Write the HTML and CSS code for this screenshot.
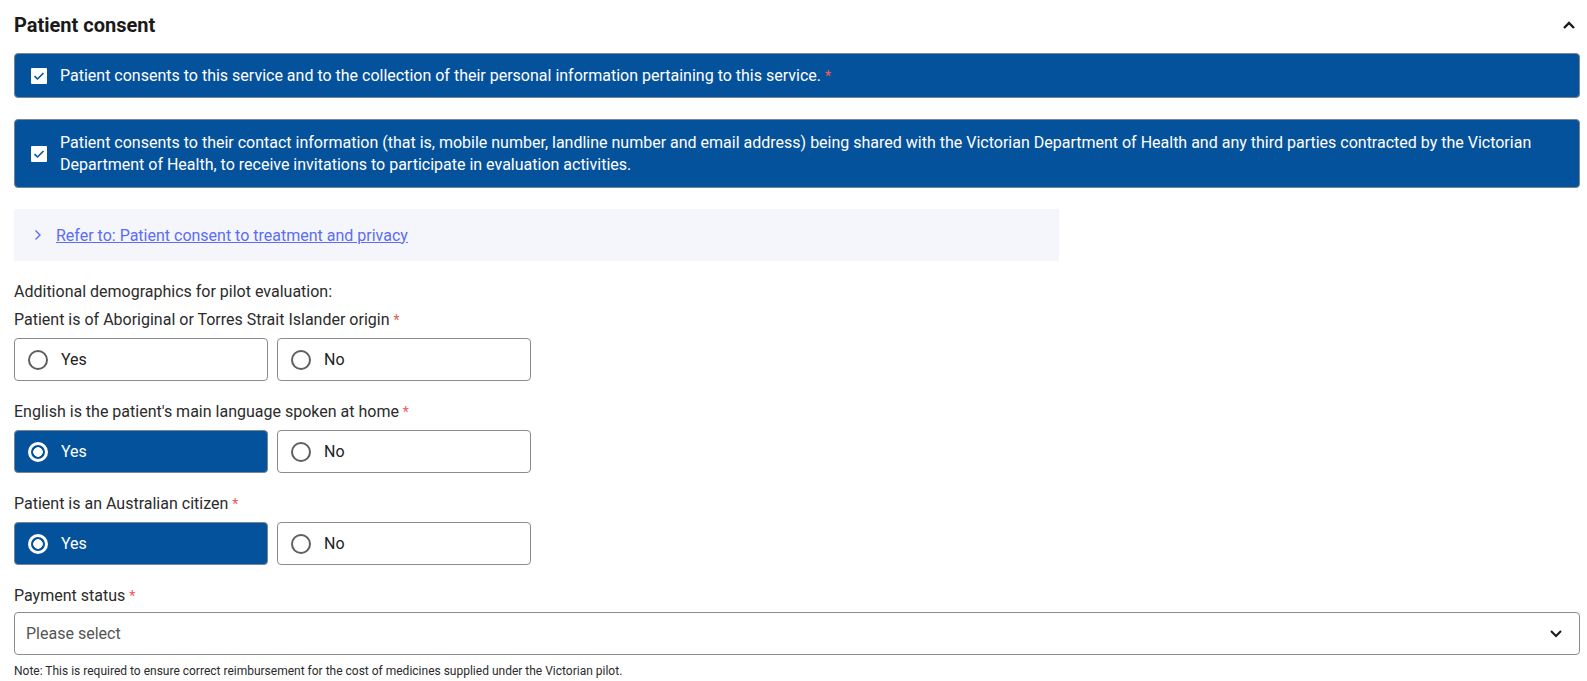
FILE: index.html
```html
<!DOCTYPE html>
<html lang="en">
<head>
    <meta charset="UTF-8">
    <meta name="viewport" content="width=device-width, initial-scale=1.0">
    <title>Patient consent</title>
    <link rel="stylesheet" href="styles.css">
</head>
<body>
    <div class="section">
        <div class="section-header">
            <h2>Patient consent</h2>
            <svg class="collapse-icon" width="14" height="10" viewBox="0 0 14 10">
                <path d="M2 8 L7 3 L12 8" fill="none" stroke="#1a1a1a" stroke-width="2.4"/>
            </svg>
        </div>

        <label class="consent-box">
            <span class="checkbox">
                <svg width="12" height="10" viewBox="0 0 12 10"><path d="M1.5 5.2 L4.5 8 L10.5 2" fill="none" stroke="#05529c" stroke-width="1.6"/></svg>
            </span>
            <span>Patient consents to this service and to the collection of their personal information pertaining to this service. <span class="req">*</span></span>
        </label>

        <label class="consent-box tall">
            <span class="checkbox">
                <svg width="12" height="10" viewBox="0 0 12 10"><path d="M1.5 5.2 L4.5 8 L10.5 2" fill="none" stroke="#05529c" stroke-width="1.6"/></svg>
            </span>
            <span>Patient consents to their contact information (that is, mobile number, landline number and email address) being shared with the Victorian Department of Health and any third parties contracted by the Victorian Department of Health, to receive invitations to participate in evaluation activities.</span>
        </label>

        <div class="refer-box">
            <svg width="8" height="12" viewBox="0 0 8 12"><path d="M1.5 1.5 L6 6 L1.5 10.5" fill="none" stroke="#5b6cf5" stroke-width="1.4"/></svg>
            <a href="#">Refer to: Patient consent to treatment and privacy</a>
        </div>

        <p class="intro">Additional demographics for pilot evaluation:</p>

        <div class="field first">
            <div class="field-label">Patient is of Aboriginal or Torres Strait Islander origin <span class="req">*</span></div>
            <div class="radio-row">
                <div class="radio"><span class="dot"></span>Yes</div>
                <div class="radio"><span class="dot"></span>No</div>
            </div>
        </div>

        <div class="field">
            <div class="field-label">English is the patient's main language spoken at home <span class="req">*</span></div>
            <div class="radio-row">
                <div class="radio selected"><span class="dot"></span>Yes</div>
                <div class="radio"><span class="dot"></span>No</div>
            </div>
        </div>

        <div class="field">
            <div class="field-label">Patient is an Australian citizen <span class="req">*</span></div>
            <div class="radio-row">
                <div class="radio selected"><span class="dot"></span>Yes</div>
                <div class="radio"><span class="dot"></span>No</div>
            </div>
        </div>

        <div class="field">
            <div class="field-label select-label">Payment status <span class="req">*</span></div>
            <div class="select">
                <span>Please select</span>
                <svg width="14" height="9" viewBox="0 0 14 9"><path d="M2 2 L7 7 L12 2" fill="none" stroke="#1a1a1a" stroke-width="2"/></svg>
            </div>
            <p class="note">Note: This is required to ensure correct reimbursement for the cost of medicines supplied under the Victorian pilot.</p>
        </div>
    </div>
</body>
</html>
```

FILE: styles.css
```css
body {
    margin: 0;
    padding: 0;
    background: #ffffff;
    color: #2b2b2b;
    font-family: Roboto, "Noto Sans", Arial, sans-serif;
}
.section {
    padding: 0 7px 0 14px;
}
.section-header {
    height: 46px;
    box-sizing: border-box;
    padding-top: 4px;
    display: flex;
    align-items: center;
    justify-content: space-between;
}
h2 {
    margin: 0;
    font-size: 20px;
    font-weight: 700;
    color: #1a1a1a;
}
.collapse-icon {
    margin-right: 4px;
}
.consent-box {
    margin-top: 7px;
    height: 45px;
    box-sizing: border-box;
    display: flex;
    align-items: center;
    gap: 13px;
    padding: 0 20px 0 16px;
    background-color: #05529c;
    border: 1px solid #7a8594;
    border-radius: 4px;
    color: #ffffff;
    font-size: 16px;
    line-height: 22px;
}
.consent-box.tall {
    margin-top: 21px;
    height: 69px;
}
.checkbox {
    flex: none;
    width: 16px;
    height: 16px;
    background: #ffffff;
    border-radius: 1px;
    display: flex;
    align-items: center;
    justify-content: center;
}
.req {
    color: #ea5a55;
    font-size: 14px;
}
.consent-box .req {
    color: #ff5a5a;
}
.refer-box {
    margin-top: 21px;
    width: 1045px;
    height: 52px;
    box-sizing: border-box;
    display: flex;
    align-items: center;
    gap: 14px;
    padding-left: 20px;
    background-color: #f5f6fb;
    font-size: 16px;
}
.refer-box a {
    color: #5b6cf5;
    text-decoration: underline;
}
.intro {
    margin: 19px 0 0;
    font-size: 16px;
    line-height: 24px;
}
.field {
    margin-top: 19px;
}
.field.first {
    margin-top: 4px;
}
.field-label {
    font-size: 16px;
    line-height: 24px;
    margin-bottom: 6px;
}
.field-label.select-label {
    margin-bottom: 4px;
}
.radio-row {
    display: flex;
    gap: 9px;
}
.radio {
    width: 254px;
    height: 43px;
    box-sizing: border-box;
    display: flex;
    align-items: center;
    gap: 13px;
    padding-left: 13px;
    border: 1px solid #8c8c8c;
    border-radius: 4px;
    font-size: 16px;
    color: #222222;
}
.dot {
    width: 20px;
    height: 20px;
    box-sizing: border-box;
    border: 2px solid #5f5f5f;
    border-radius: 50%;
}
.radio.selected {
    background-color: #05529c;
    border-color: #7a8594;
    color: #ffffff;
}
.radio.selected .dot {
    border: 3px solid #ffffff;
    background: radial-gradient(circle, #ffffff 0 4.5px, transparent 5px);
}
.select {
    height: 43px;
    box-sizing: border-box;
    display: flex;
    align-items: center;
    justify-content: space-between;
    padding: 0 16px 0 11px;
    border: 1px solid #8c8c8c;
    border-radius: 4px;
    font-size: 16px;
    color: #555555;
}
.note {
    margin: 8px 0 0;
    font-size: 12px;
    line-height: 16px;
    color: #2b2b2b;
}
```
